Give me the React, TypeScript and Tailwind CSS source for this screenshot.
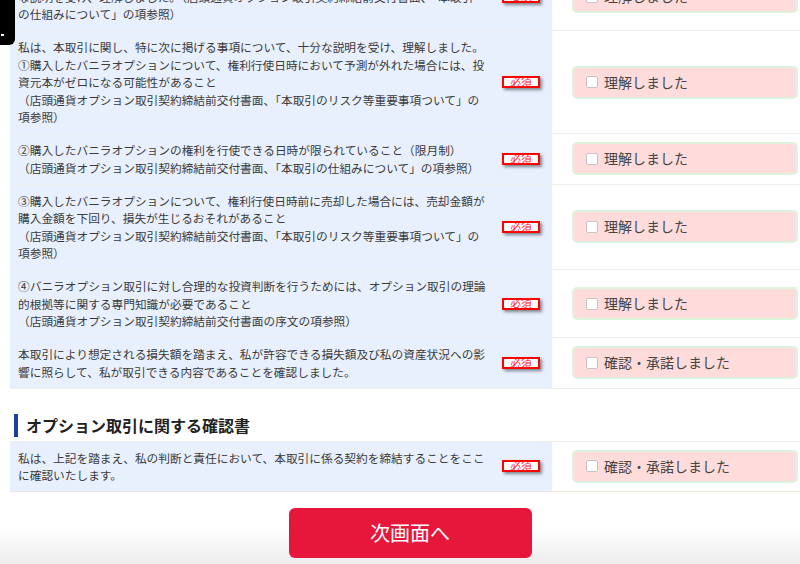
const jp = { fontFamily: '"Noto Sans CJK JP", "Noto Sans", sans-serif' };

type Row = { lines: string[]; label: string };

const rows: Row[] = [
  {
    lines: [
      "私は、本取引の仕組みについて、店頭通貨オプション取引契約締結前交付書面に基づき、十分",
      "な説明を受け、理解しました。（店頭通貨オプション取引契約締結前交付書面、「本取引",
      "の仕組みについて」の項参照）",
    ],
    label: "理解しました",
  },
  {
    lines: [
      "私は、本取引に関し、特に次に掲げる事項について、十分な説明を受け、理解しました。",
      "①購入したバニラオプションについて、権利行使日時において予測が外れた場合には、投",
      "資元本がゼロになる可能性があること",
      "（店頭通貨オプション取引契約締結前交付書面、「本取引のリスク等重要事項ついて」の",
      "項参照）",
    ],
    label: "理解しました",
  },
  {
    lines: [
      "②購入したバニラオプションの権利を行使できる日時が限られていること（限月制）",
      "（店頭通貨オプション取引契約締結前交付書面、「本取引の仕組みについて」の項参照）",
    ],
    label: "理解しました",
  },
  {
    lines: [
      "③購入したバニラオプションについて、権利行使日時前に売却した場合には、売却金額が",
      "購入金額を下回り、損失が生じるおそれがあること",
      "（店頭通貨オプション取引契約締結前交付書面、「本取引のリスク等重要事項ついて」の",
      "項参照）",
    ],
    label: "理解しました",
  },
  {
    lines: [
      "④バニラオプション取引に対し合理的な投資判断を行うためには、オプション取引の理論",
      "的根拠等に関する専門知識が必要であること",
      "（店頭通貨オプション取引契約締結前交付書面の序文の項参照）",
    ],
    label: "理解しました",
  },
  {
    lines: [
      "本取引により想定される損失額を踏まえ、私が許容できる損失額及び私の資産状況への影",
      "響に照らして、私が取引できる内容であることを確認しました。",
    ],
    label: "確認・承諾しました",
  },
];

const finalRow: Row = {
  lines: [
    "私は、上記を踏まえ、私の判断と責任において、本取引に係る契約を締結することをここ",
    "に確認いたします。",
  ],
  label: "確認・承諾しました",
};

function ConfirmRow({ row, last }: { row: Row; last?: boolean }) {
  return (
    <div className={`flex border-b ${last ? "border-[#ece6dc]" : "border-[#eeeeee]"}`}>
      <div className="flex w-[542px] items-center bg-[#e8f0fe] py-[7.25px] pl-[8px]">
        <div className="w-[472px] text-[11.7px] leading-[17.5px] text-[#3a3a3a]">
          {row.lines.map((l, i) => (
            <div key={i} className="whitespace-nowrap">
              {l}
            </div>
          ))}
        </div>
        <div className="flex flex-1 justify-center">
          <span className="flex h-[12px] w-[38px] items-center justify-center border-2 border-[#f00] bg-white text-[10.5px] leading-none text-[#ff1a1a] shadow-[2px_2px_3px_rgba(0,0,0,0.45)]">
            必須
          </span>
        </div>
      </div>
      <div className="flex flex-1 items-center bg-white">
        <label className="ml-[20px] flex h-[33px] w-[226px] items-center gap-[6px] rounded-[5px] border-2 border-[#def3db] bg-[#ffdcdc] pl-[12px]">
          <span className="h-[12px] w-[12px] rounded-[2px] border border-[#c4c4c4] bg-white" />
          <span className="text-[14px] text-[#444]">{row.label}</span>
        </label>
      </div>
    </div>
  );
}

export default function App() {
  return (
    <div className="relative h-[564px] w-[800px] overflow-hidden bg-white" style={jp}>
      <div className="ml-[10px] mt-[-37px] w-[800px]">
        {rows.map((r, i) => (
          <ConfirmRow key={i} row={r} />
        ))}

        <div className="mb-[4px] mt-[25px] flex items-center gap-[8px] pl-[4px]">
          <span className="h-[23px] w-[4px] bg-[#1b3f9c]" />
          <h2 className="text-[16px] font-bold leading-[23px] text-[#222]">
            オプション取引に関する確認書
          </h2>
        </div>
        <div className="border-t border-[#eeeeee]">
          <ConfirmRow row={finalRow} last />
        </div>

        <div className="ml-[-10px] flex h-[80px] w-[820px] justify-center bg-[linear-gradient(to_bottom,#ffffff_45%,#e8e8e8)] pt-[16px]">
          <button className="h-[50px] w-[243px] rounded-[6px] bg-[#e6173a] text-[20px] text-white">
            次画面へ
          </button>
        </div>
      </div>

      <div className="absolute left-0 top-0 h-[45px] w-[15px] rounded-br-[6px] bg-black">
        <span className="absolute left-[1px] top-[34px] h-[2px] w-[3px] bg-white" />
      </div>
    </div>
  );
}
